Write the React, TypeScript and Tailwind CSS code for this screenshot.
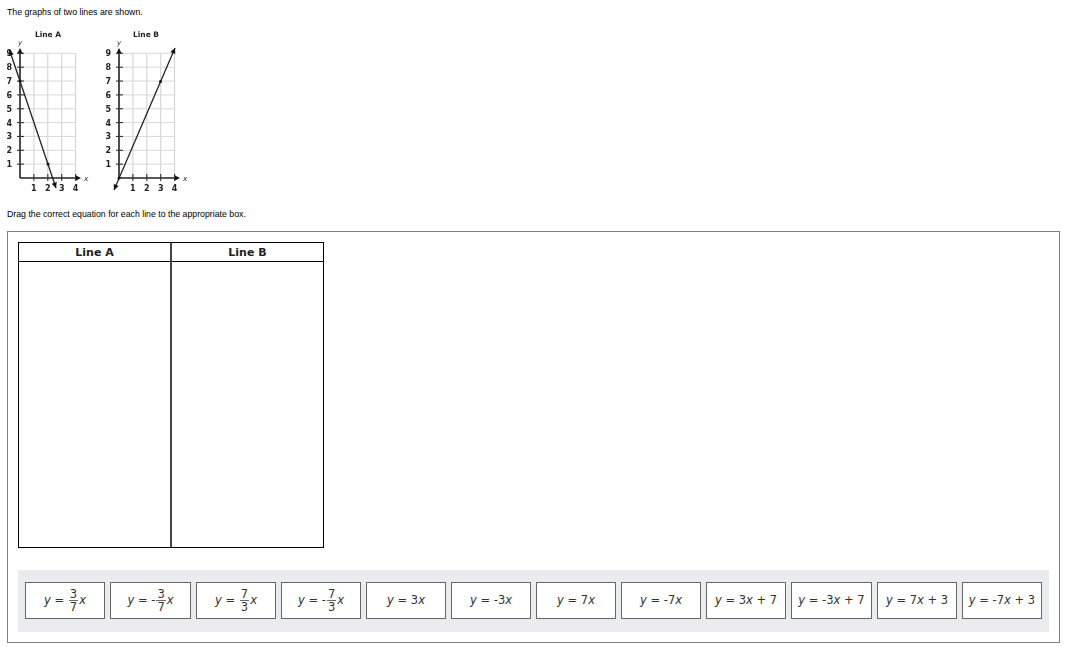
import React from "react";

const ticks = [1, 2, 3, 4];
const ys = [1, 2, 3, 4, 5, 6, 7, 8, 9];

function Graph({ ox, title, tx, line, points }: { ox: number; title: string; tx: number; line: [number, number, number, number]; points: [number, number][] }) {
  const ux = 13.9;
  const uy = 13.85;
  const oy = 178;
  const [x1, y1, x2, y2] = line;
  const a = Math.atan2(y2 - y1, x2 - x1);
  const head = (x: number, y: number, ang: number) => {
    const l = 5.5;
    const w = 2.7;
    const bx = x - l * Math.cos(ang);
    const by = y - l * Math.sin(ang);
    const nx = -Math.sin(ang) * w;
    const ny = Math.cos(ang) * w;
    return `${x},${y} ${bx + nx},${by + ny} ${bx - nx},${by - ny}`;
  };
  const label = { fontFamily: "'DejaVu Sans', sans-serif", fontWeight: 700, fill: "#222" };
  return (
    <g>
      <text x={tx} y={37} textAnchor="middle" fontSize={7.5} {...label}>{title}</text>
      {ticks.map((t) => (
        <line key={t} x1={ox + t * ux} x2={ox + t * ux} y1={oy - 9 * uy} y2={oy} stroke="#cfcfcf" strokeWidth={1} />
      ))}
      {ys.map((t) => (
        <line key={t} x1={ox} x2={ox + 4 * ux} y1={oy - t * uy} y2={oy - t * uy} stroke="#d8d8d8" strokeWidth={1} />
      ))}
      <line x1={ox} x2={ox} y1={oy} y2={50} stroke="#222" strokeWidth={1.6} />
      <line x1={ox} x2={ox + 58} y1={oy} y2={oy} stroke="#222" strokeWidth={1.6} />
      <polygon points={head(ox, 48, -Math.PI / 2)} fill="#111" />
      <polygon points={head(ox + 61, oy, 0)} fill="#111" />
      {ticks.map((t) => (
        <g key={t}>
          <line x1={ox + t * ux} x2={ox + t * ux} y1={oy - 4} y2={oy + 3} stroke="#333" strokeWidth={1.1} />
          <text x={ox + t * ux} y={191} textAnchor="middle" fontSize={8} {...label}>{t}</text>
        </g>
      ))}
      {ys.map((t) => (
        <g key={t}>
          <line x1={ox - 3} x2={ox + 4} y1={oy - t * uy} y2={oy - t * uy} stroke="#333" strokeWidth={1.1} />
          <text x={ox - 10.7} y={oy - t * uy + 3} textAnchor="middle" fontSize={8} {...label}>{t}</text>
        </g>
      ))}
      <text x={ox + 64} y={oy + 2.5} fontFamily="'DejaVu Sans', sans-serif" fontStyle="italic" fontSize={7.5} fill="#333">x</text>
      <text x={ox} y={45} textAnchor="middle" fontFamily="'DejaVu Sans', sans-serif" fontStyle="italic" fontSize={7} fill="#333">y</text>
      <line x1={x1} y1={y1} x2={x2} y2={y2} stroke="#222" strokeWidth={1.3} />
      <polygon points={head(x1, y1, a + Math.PI)} fill="#111" />
      <polygon points={head(x2, y2, a)} fill="#111" />
      {points.map(([px, py], i) => (
        <circle key={i} cx={px} cy={py} r={1.5} fill="#111" />
      ))}
    </g>
  );
}

function Frac({ n, d }: { n: string; d: string }) {
  return (
    <span className="inline-flex flex-col items-center mx-[1px] text-[11.5px]">
      <span className="border-b border-[#666] px-[1px] leading-[11px]">{n}</span>
      <span className="leading-[12px]">{d}</span>
    </span>
  );
}

function Tile({ w, children }: { w: string; children: React.ReactNode }) {
  return (
    <div className={`${w} h-[37px] shrink-0 bg-white border border-[#666] flex items-center justify-center whitespace-pre text-[11.5px] text-[#333]`}>
      {children}
    </div>
  );
}

const V = ({ c }: { c: string }) => <i className="italic">{c}</i>;

export default function App() {
  return (
    <div className="w-[1072px] h-[647px] bg-white overflow-hidden text-black font-['Liberation_Sans',Arial,sans-serif]">
      <p className="pl-[7px] pt-[7px] h-[28px] text-[8.75px] leading-[11px]">The graphs of two lines are shown.</p>
      <svg className="block blur-[0.3px]" width={200} height={170} viewBox="0 28 200 170">
        <Graph ox={20} title="Line A" tx={48} line={[9.5, 50, 56, 188]} points={[[20, 81], [48, 164]]} />
        <Graph ox={119} title="Line B" tx={146} line={[114, 190, 175, 48]} points={[[119, 178], [160.5, 81.5]]} />
      </svg>
      <p className="pl-[7px] pt-[11px] h-[33px] text-[8.75px] leading-[11px]">Drag the correct equation for each line to the appropriate box.</p>
      <div className="ml-[7px] w-[1053px] h-[412px] border border-[#808080] pt-[10px] pl-[10px] font-['DejaVu_Sans',Verdana,sans-serif]">
        <div className="w-[306px] h-[306px] border border-black flex flex-col">
          <div className="h-[19px] shrink-0 grid grid-cols-[153px_1fr] border-b border-black text-[11px] font-bold text-[#222] leading-[19px] text-center">
            <div className="border-r-2 border-[#444]">Line A</div>
            <div>Line B</div>
          </div>
          <div className="grow grid grid-cols-[153px_1fr]">
            <div className="border-r-2 border-[#444]" />
            <div />
          </div>
        </div>
        <div className="mt-[22px] w-[1031px] h-[62px] bg-[#e9ebef] pl-[7px] pt-[12px] flex items-start gap-[5px]">
          <Tile w="w-[80px]"><V c="y" /> = <Frac n="3" d="7" /><V c="x" /></Tile>
          <Tile w="w-[81px]"><V c="y" /> = -<Frac n="3" d="7" /><V c="x" /></Tile>
          <Tile w="w-[80px]"><V c="y" /> = <Frac n="7" d="3" /><V c="x" /></Tile>
          <Tile w="w-[80px]"><V c="y" /> = -<Frac n="7" d="3" /><V c="x" /></Tile>
          <Tile w="w-[80px]"><V c="y" /> = 3<V c="x" /></Tile>
          <Tile w="w-[80px]"><V c="y" /> = -3<V c="x" /></Tile>
          <Tile w="w-[80px]"><V c="y" /> = 7<V c="x" /></Tile>
          <Tile w="w-[80px]"><V c="y" /> = -7<V c="x" /></Tile>
          <Tile w="w-[80px]"><V c="y" /> = 3<V c="x" /> + 7</Tile>
          <Tile w="w-[81px]"><V c="y" /> = -3<V c="x" /> + 7</Tile>
          <Tile w="w-[80px]"><V c="y" /> = 7<V c="x" /> + 3</Tile>
          <Tile w="w-[80px]"><V c="y" /> = -7<V c="x" /> + 3</Tile>
        </div>
      </div>
    </div>
  );
}
